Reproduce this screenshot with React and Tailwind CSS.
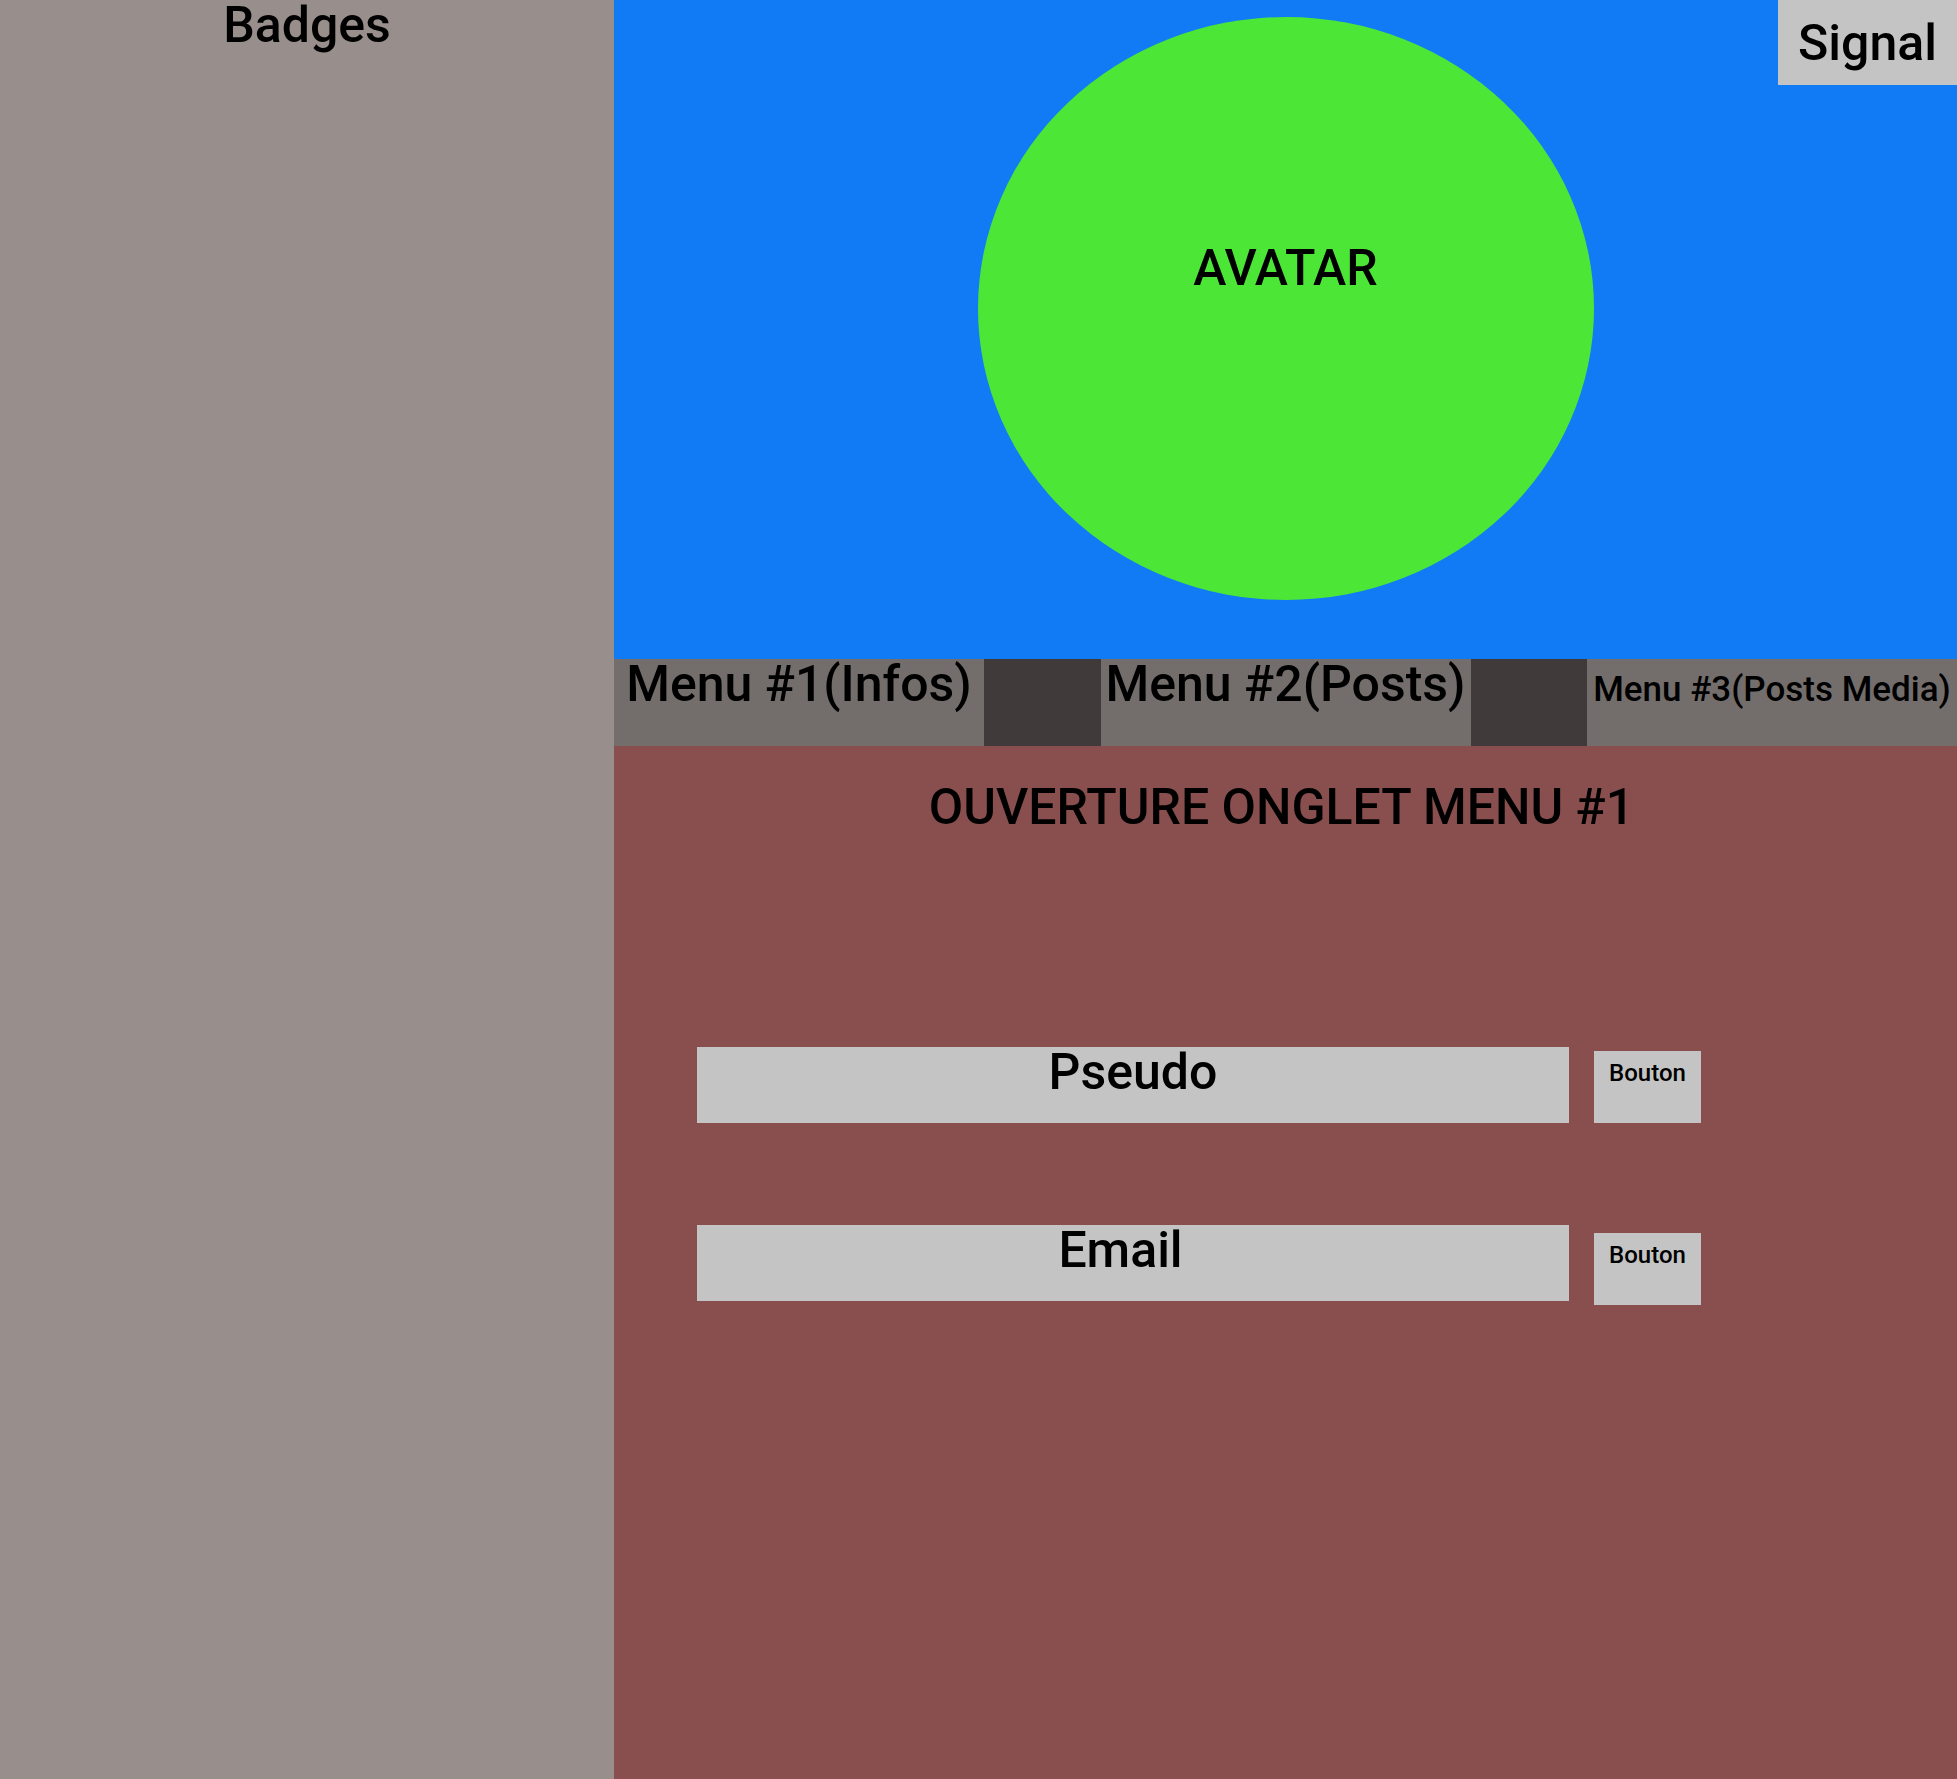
const MENUS = [
  { id: 1, label: "Menu #1(Infos)", size: "text-[50px]" },
  { id: 2, label: "Menu #2(Posts)", size: "text-[50px]" },
  { id: 3, label: "Menu #3(Posts Media)", size: "text-[35px] pt-[13px]" },
];

const Field = ({ label, labelClass = "", buttonClass = "" }) => (
  <div className="flex items-start gap-[25px]">
    <div className={`w-[872px] h-[76px] bg-[#c4c4c4] text-center ${labelClass}`}>
      <span className="text-[50px] leading-none">{label}</span>
    </div>
    <div className={`w-[107px] h-[72px] bg-[#c4c4c4] pt-[10px] text-[24px] leading-none text-center ${buttonClass}`}>
      Bouton
    </div>
  </div>
);

export default function App() {
  return (
    <div
      className="flex w-[1957px] h-[1779px] text-black font-medium"
      style={{ fontFamily: "Roboto, 'Liberation Sans', sans-serif" }}
    >
      {/* sidebar */}
      <aside className="w-[614px] shrink-0 bg-[#988e8b] text-center">
        <h2 className="text-[50px] leading-none font-medium">Badges</h2>
      </aside>

      <div className="flex flex-col flex-1">
        {/* header with avatar */}
        <header className="relative h-[659px] bg-[#107bf4] flex justify-center pt-[17px]">
          <div className="w-[616px] h-[583px] rounded-[50%] bg-[#4ce736] flex justify-center pt-[226px]">
            <span className="text-[50px] leading-none">AVATAR</span>
          </div>
          <div className="absolute top-0 right-0 w-[179px] h-[85px] bg-[#c4c4c4] flex items-center justify-center">
            <span className="text-[50px] leading-none">Signal</span>
          </div>
        </header>

        {/* tabs */}
        <nav className="flex h-[87px] bg-[#403a3a]">
          {MENUS.map((m, i) => (
            <div key={m.id} className="contents">
              {i > 0 && <div className="flex-1" />}
              <div className={`w-[370px] bg-[#736e6c] text-center leading-none ${m.size}`}>
                {m.label}
              </div>
            </div>
          ))}
        </nav>

        {/* tab content */}
        <main className="flex-1 bg-[#894f4e] pt-[36px]">
          <h1 className="text-[50px] leading-none font-medium text-center pr-[8px]">OUVERTURE ONGLET MENU #1</h1>
          <div className="flex flex-col gap-[102px] pl-[83px] mt-[215px]">
            <Field label="Pseudo" buttonClass="mt-[4px]" />
            <Field label="Email" labelClass="pr-[25px]" buttonClass="mt-[8px]" />
          </div>
        </main>
      </div>
    </div>
  );
}
